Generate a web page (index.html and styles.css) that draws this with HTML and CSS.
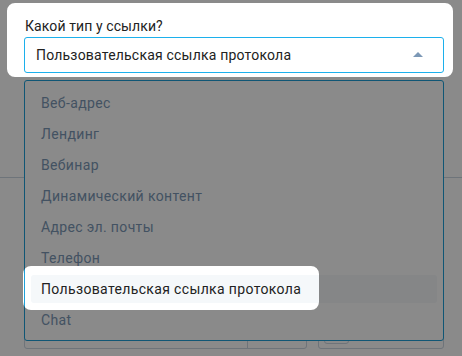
FILE: index.html
```html
<!DOCTYPE html>
<html lang="ru">
<head>
    <meta charset="UTF-8">
    <meta name="viewport" content="width=device-width, initial-scale=1.0">
    <title>Тип ссылки</title>
    <link rel="stylesheet" href="styles.css">
</head>
<body>
    <div class="form">
        <div class="field">
            <label class="label">Какой тип у ссылки?</label>
            <div class="select">
                <span>Пользовательская ссылка протокола</span>
                <span class="caret"></span>
            </div>

            <!-- Open dropdown -->
            <ul class="menu">
                <li class="item">Веб-адрес</li>
                <li class="item">Лендинг</li>
                <li class="item">Вебинар</li>
                <li class="item">Динамический контент</li>
                <li class="item">Адрес эл. почты</li>
                <li class="item">Телефон</li>
                <li class="item selected">Пользовательская ссылка протокола</li>
                <li class="item">Chat</li>
            </ul>
        </div>

        <div class="divider"></div>

        <div class="row">
            <div class="input-group">
                <div class="input-main"></div>
                <div class="input-addon"></div>
            </div>
            <div class="input-side">
                <div class="chip"></div>
            </div>
        </div>
    </div>

    <!-- Tour overlay with two spotlight holes -->
    <svg class="overlay" width="462" height="356" viewBox="0 0 462 356">
        <path fill-rule="evenodd" d="M0 0H462V356H0Z
            M15 3H445A8 8 0 0 1 453 11V69A8 8 0 0 1 445 77H15A8 8 0 0 1 7 69V11A8 8 0 0 1 15 3Z
            M31 266H311A8 8 0 0 1 319 274V302A8 8 0 0 1 311 310H31A8 8 0 0 1 23 302V274A8 8 0 0 1 31 266Z"/>
    </svg>
</body>
</html>
```

FILE: styles.css
```css
body {
    margin: 0;
    background-color: #fff;
    font-family: Roboto, "Noto Sans", sans-serif;
    color: #222;
    overflow: hidden;
}
.form {
    padding: 17px 18px 0 24px;
}
.field {
    position: relative;
}
.label {
    display: block;
    font-size: 14px;
    line-height: 18px;
    padding-left: 1px;
    margin-bottom: 2px;
    letter-spacing: 0.1px;
}
.select {
    height: 36px;
    box-sizing: border-box;
    border: 1px solid #1cb0ec;
    border-radius: 3px;
    display: flex;
    align-items: center;
    justify-content: space-between;
    padding: 0 20px 0 11px;
    font-size: 14px;
    letter-spacing: 0.2px;
}
.caret {
    width: 0;
    height: 0;
    border-left: 5px solid transparent;
    border-right: 5px solid transparent;
    border-bottom: 5px solid #7c98b6;
    margin-top: -1px;
}
.menu {
    position: absolute;
    top: 63px;
    left: 0;
    right: 0;
    margin: 0;
    padding: 8px 6px 6px;
    list-style: none;
    background-color: #fff;
    border: 1px solid #1ea0d8;
    border-radius: 3px;
    display: flex;
    flex-direction: column;
    gap: 3px;
    z-index: 1;
}
.item {
    height: 28px;
    line-height: 28px;
    padding-left: 10px;
    font-size: 14px;
    letter-spacing: 0.35px;
    color: #7c98b6;
    border-radius: 3px;
}
.item.selected {
    background-color: #f5f8fa;
    color: #222;
}
.divider {
    margin: 104px -18px 0 -24px;
    height: 1px;
    background-color: #cbd6e2;
}
.row {
    margin-top: 141px;
    display: flex;
    gap: 11px;
}
.input-group {
    display: flex;
    width: 283px;
    height: 30px;
    box-sizing: border-box;
    border: 1px solid #cbd6e2;
    border-radius: 3px;
}
.input-main {
    width: 222px;
    border-right: 1px solid #cbd6e2;
}
.input-side {
    flex: 1;
    height: 30px;
    box-sizing: border-box;
    border: 1px solid #cbd6e2;
    border-radius: 3px;
    padding: 5px 0 0 5px;
}
.chip {
    width: 25px;
    height: 19px;
    box-sizing: border-box;
    border: 1px solid #cbd6e2;
    border-radius: 3px;
}
.overlay {
    position: absolute;
    top: 0;
    left: 0;
    z-index: 2;
    fill: rgba(0, 0, 0, 0.46);
}
```
